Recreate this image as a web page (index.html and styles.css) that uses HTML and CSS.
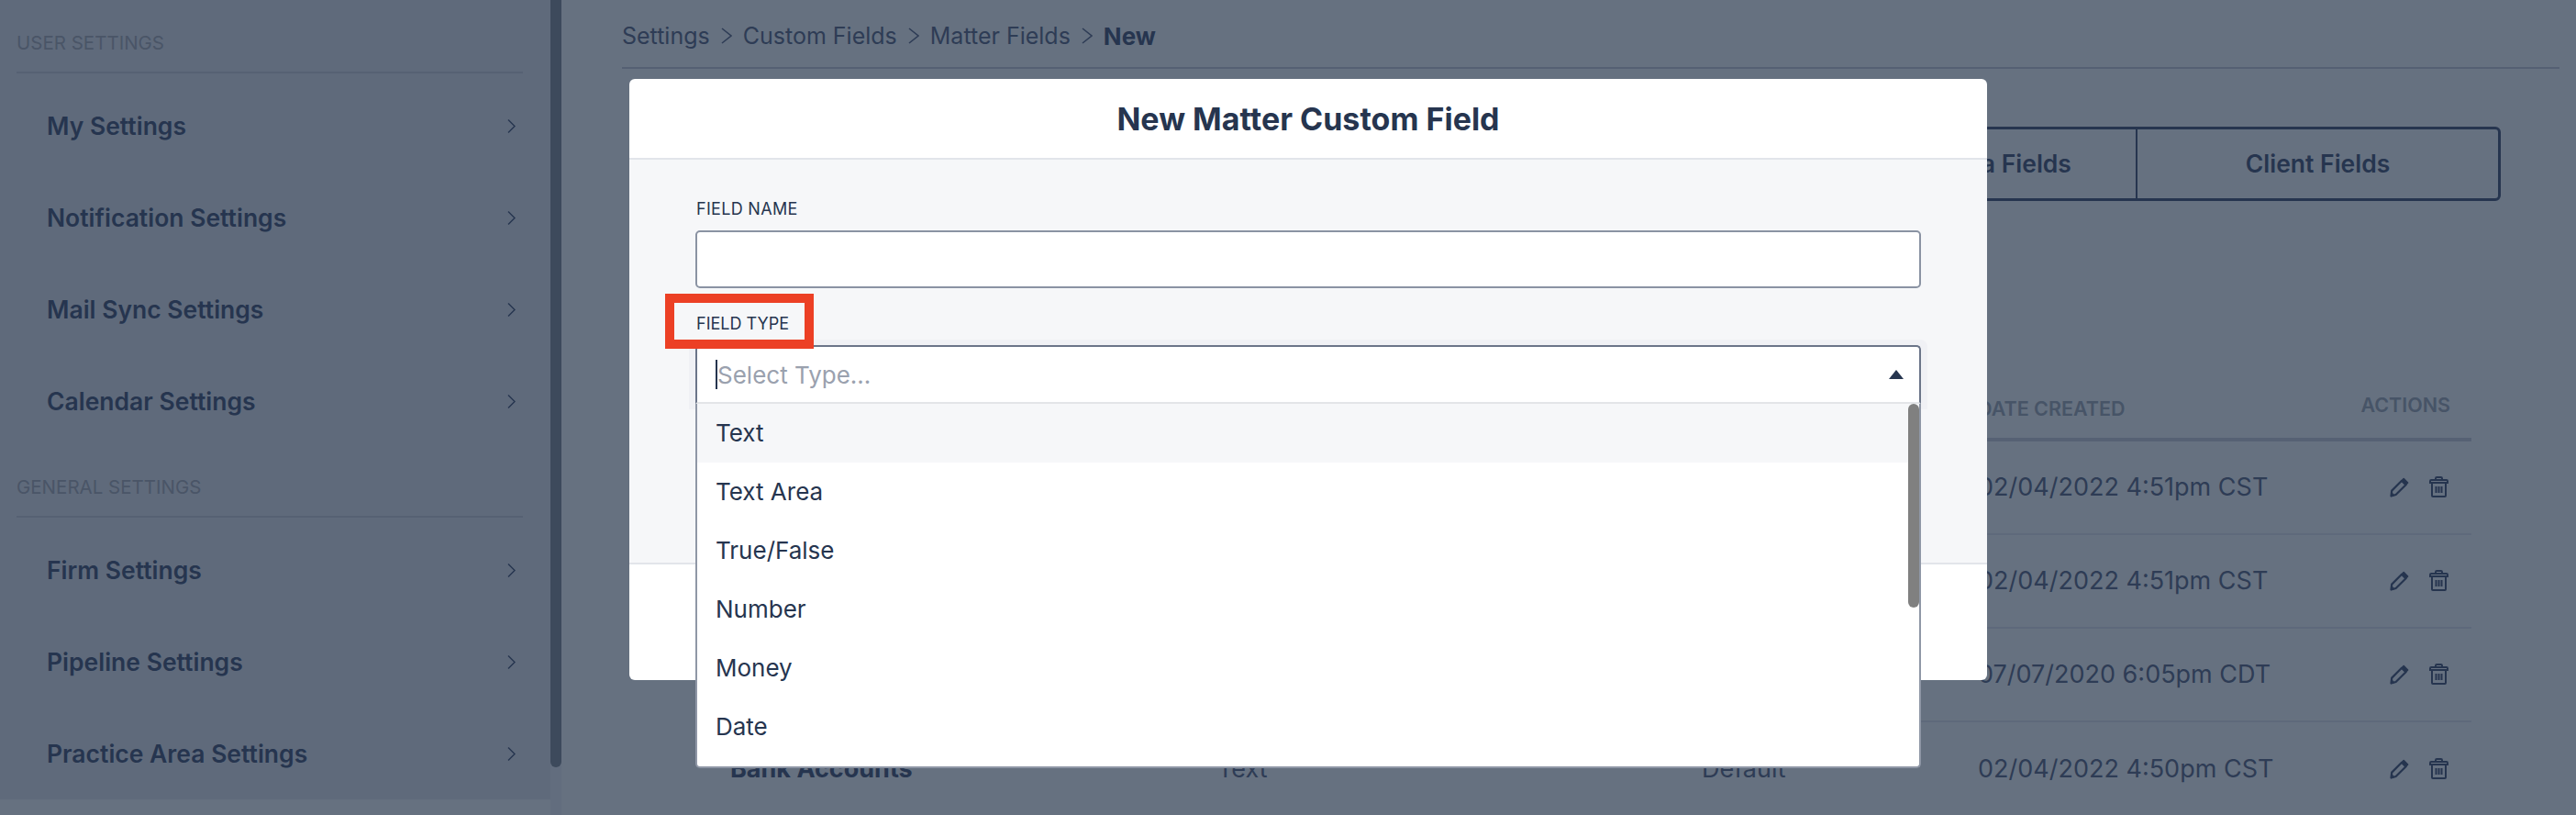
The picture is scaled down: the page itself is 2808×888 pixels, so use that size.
FILE: index.html
```html
<!DOCTYPE html>
<html lang="en">
<head>
<meta charset="utf-8">
<title>New Matter Custom Field</title>
<link rel="stylesheet" href="styles.css">
</head>
<body>
<div class="page">
  <aside class="sidebar">
    <div class="side-scroll">
      <section class="side-group">
        <h3 class="side-title">USER SETTINGS</h3>
        <a class="side-item"><span>My Settings</span><svg class="chev" viewBox="0 0 9 15"><path d="M1 .5l7 7-7 7"/></svg></a>
        <a class="side-item"><span>Notification Settings</span><svg class="chev" viewBox="0 0 9 15"><path d="M1 .5l7 7-7 7"/></svg></a>
        <a class="side-item"><span>Mail Sync Settings</span><svg class="chev" viewBox="0 0 9 15"><path d="M1 .5l7 7-7 7"/></svg></a>
        <a class="side-item"><span>Calendar Settings</span><svg class="chev" viewBox="0 0 9 15"><path d="M1 .5l7 7-7 7"/></svg></a>
      </section>
      <section class="side-group">
        <h3 class="side-title">GENERAL SETTINGS</h3>
        <a class="side-item"><span>Firm Settings</span><svg class="chev" viewBox="0 0 9 15"><path d="M1 .5l7 7-7 7"/></svg></a>
        <a class="side-item"><span>Pipeline Settings</span><svg class="chev" viewBox="0 0 9 15"><path d="M1 .5l7 7-7 7"/></svg></a>
        <a class="side-item"><span>Practice Area Settings</span><svg class="chev" viewBox="0 0 9 15"><path d="M1 .5l7 7-7 7"/></svg></a>
      </section>
    </div>
    <div class="side-track"><div class="side-thumb"></div></div>
  </aside>
  <main class="main">
    <nav class="crumbs">
      <span>Settings</span><svg class="crumb-sep" viewBox="0 0 12 18"><path d="M1 1l10 8-10 8"/></svg>
      <span>Custom Fields</span><svg class="crumb-sep" viewBox="0 0 12 18"><path d="M1 1l10 8-10 8"/></svg>
      <span>Matter Fields</span><svg class="crumb-sep" viewBox="0 0 12 18"><path d="M1 1l10 8-10 8"/></svg>
      <strong>New</strong>
    </nav>
    <div class="tabs">
      <div class="tab"></div>
      <div class="tab">Practice Area Fields</div>
      <div class="tab">Client Fields</div>
    </div>
    <div class="table">
      <div class="row head">
        <div class="c-name"></div><div class="c-type"></div><div class="c-def"></div>
        <div class="c-date">DATE CREATED</div>
        <div class="c-act">ACTIONS</div>
      </div>
      <div class="row">
        <div class="c-name"></div><div class="c-type"></div><div class="c-def"></div>
        <div class="c-date">02/04/2022 4:51pm CST</div>
        <div class="c-act"><svg class="ico-pen" viewBox="0 0 21 22"><use href="#pen"/></svg><svg class="ico-trash" viewBox="0 0 21 23"><use href="#trash"/></svg></div>
      </div>
      <div class="row">
        <div class="c-name"></div><div class="c-type"></div><div class="c-def"></div>
        <div class="c-date">02/04/2022 4:51pm CST</div>
        <div class="c-act"><svg class="ico-pen" viewBox="0 0 21 22"><use href="#pen"/></svg><svg class="ico-trash" viewBox="0 0 21 23"><use href="#trash"/></svg></div>
      </div>
      <div class="row">
        <div class="c-name"></div><div class="c-type"></div><div class="c-def"></div>
        <div class="c-date">07/07/2020 6:05pm CDT</div>
        <div class="c-act"><svg class="ico-pen" viewBox="0 0 21 22"><use href="#pen"/></svg><svg class="ico-trash" viewBox="0 0 21 23"><use href="#trash"/></svg></div>
      </div>
      <div class="row">
        <div class="c-name bold">Bank Accounts</div><div class="c-type">Text</div><div class="c-def">Default</div>
        <div class="c-date">02/04/2022 4:50pm CST</div>
        <div class="c-act"><svg class="ico-pen" viewBox="0 0 21 22"><use href="#pen"/></svg><svg class="ico-trash" viewBox="0 0 21 23"><use href="#trash"/></svg></div>
      </div>
    </div>
  </main>
</div>

<div class="modal">
  <header class="modal-head">New Matter Custom Field</header>
  <div class="modal-body">
    <label class="field-label">FIELD NAME</label>
    <div class="input"></div>
    <label class="field-label type-label">FIELD TYPE</label>
    <div class="select-wrap">
      <div class="select">
        <span class="caret"></span><span class="placeholder">Select Type...</span>
        <span class="arrow"></span>
      </div>
      <div class="menu">
        <div class="opt active">Text</div>
        <div class="opt">Text Area</div>
        <div class="opt">True/False</div>
        <div class="opt">Number</div>
        <div class="opt">Money</div>
        <div class="opt">Date</div>
        <div class="menu-thumb"></div>
      </div>
    </div>
  </div>
  <footer class="modal-foot"></footer>
</div>
<div class="callout"></div>

<svg class="defs" width="0" height="0">
  <defs>
    <g id="pen">
      <path d="M15.2 1.6L19.6 6 17.500 8.200 13 3.800Z" fill="currentColor" stroke="currentColor" stroke-width="1.6" stroke-linejoin="round"/>
      <path d="M13 3.800L17.500 8.200 6.600 19 1.500 20.500 2.200 14.600Z" fill="none" stroke="currentColor" stroke-width="2.200" stroke-linejoin="round"/>
      <path d="M1.500 20.500L2 16.600 5 19.600Z" fill="currentColor" stroke="currentColor" stroke-linejoin="round"/>
    </g>
    <g id="trash" fill="none" stroke="currentColor" stroke-width="2">
      <path d="M7 4V2.200C7 1.500 7.500 1 8.200 1h4.600c.7 0 1.200.5 1.200 1.200V4"/>
      <path d="M1 7V5.200C1 4.500 1.500 4 2.200 4h16.600c.7 0 1.200.5 1.200 1.200V7Z"/>
      <path d="M3 7v14c0 .6.4 1 1 1h13c.6 0 1-.4 1-1V7"/>
      <path d="M7.500 11v7M10.500 11v7M13.500 11v7"/>
    </g>
  </defs>
</svg>
</body>
</html>
```
FILE: styles.css
```css
* { box-sizing: border-box; }
html, body { margin: 0; padding: 0; }
body {
  width: 2808px;
  height: 888px;
  overflow: hidden;
  background: #667180;
  color: #26354f;
  font-family: Inter, "Noto Sans", sans-serif;
  font-size: 26px;
  position: relative;
}
.page { display: flex; height: 888px; }
.sidebar { width: 612px; height: 888px; display: flex; flex: none; }
.side-scroll {
  width: 600px;
  height: 871px;
  background: #5f6a7b;
  padding: 0 30px 0 18px;
}
.side-track { width: 12px; height: 888px; background: #626d7e; }
.side-thumb { height: 836px; background: #3d4a5c; border-radius: 0 0 6px 6px; }
.side-title {
  margin: 0 0 7px;
  height: 80px;
  padding-top: 34px;
  border-bottom: 2px solid #566173;
  font-size: 20.5px;
  line-height: 26px;
  font-weight: 400;
  color: #4a5567;
}
.side-group + .side-group .side-title { padding-top: 31px; height: 77px; }
.side-item {
  height: 100px;
  display: flex;
  align-items: center;
  justify-content: space-between;
  padding: 0 8px 0 33px;
  font-size: 26.5px;
  font-weight: 600;
  color: #26354f;
}
.side-item span { margin-top: -1px; }
.chev { width: 9px; height: 15px; fill: none; stroke: #26354f; stroke-width: 1.4; }

.main { flex: 1; padding: 0 18px 0 66px; min-width: 0; }
.crumbs {
  height: 75px;
  display: flex;
  align-items: center;
  gap: 12px;
  padding-top: 5px;
  border-bottom: 2px solid #556073;
  font-size: 25px;
  color: #2e3c55;
}
.crumbs strong { font-size: 26px; font-weight: 700; color: #26354f; }
.crumb-sep { width: 12px; height: 18px; fill: none; stroke: #2e3c55; stroke-width: 1.6; }
.tabs {
  display: flex;
  height: 81px;
  margin: 63px 64px 0 auto;
  width: 1194px;
  border: 3px solid #26354f;
  border-radius: 6px;
}
.tab {
  flex: 1;
  display: flex;
  align-items: center;
  justify-content: center;
  padding-bottom: 2px;
  font-size: 26.5px;
  font-weight: 600;
  color: #26354f;
  border-left: 2px solid #26354f;
}
.tab:first-child { border-left: 0; }
.tab:last-child { flex: 0 0 395px; }
.table { margin: 0 96px 0 102px; }
.row {
  display: flex;
  align-items: center;
  height: 102px;
  padding-bottom: 1px;
  border-bottom: 2px solid #5e697b;
  font-size: 27px;
  color: #2e3c55;
}
.row:last-child { border-bottom: 0; }
.row.head {
  height: 262px;
  padding-bottom: 0;
  align-items: flex-end;
  border-bottom: 4px solid #566174;
  font-size: 21.5px;
  font-weight: 600;
  color: #475467;
}
.c-name { width: 547px; padding-left: 16px; flex: none; }
.bold { font-weight: 700; color: #26354f; }
.c-type { width: 528px; flex: none; }
.c-def { width: 301px; flex: none; }
.c-date { width: 400px; flex: none; }
.c-act { flex: 1; display: flex; gap: 22px; align-items: center; justify-content: flex-end; padding-right: 25px; }
.row.head .c-date { padding-bottom: 19px; }
.row.head .c-act { padding: 0 23px 23px 0; }
.ico-pen { width: 21px; height: 22px; color: #26354f; }
.ico-trash { width: 21px; height: 23px; color: #26354f; }

.modal {
  position: absolute;
  left: 686px;
  top: 86px;
  width: 1480px;
  height: 655px;
  display: flex;
  flex-direction: column;
  background: #fff;
  border-radius: 6px;
}
.modal-head {
  height: 88px;
  flex: none;
  display: flex;
  align-items: center;
  justify-content: center;
  border-bottom: 2px solid #e2e5ea;
  font-size: 34px;
  font-weight: 700;
  color: #26354f;
}
.modal-body {
  height: 441px;
  flex: none;
  background: #f6f7f9;
  border-bottom: 2px solid #e2e5ea;
  padding: 0 72px;
  position: relative;
}
.modal-foot { flex: 1; }
.field-label {
  display: block;
  font-size: 18px;
  line-height: 24px;
  padding-left: 1px;
  color: #26354f;
}
.field-label:first-child { padding-top: 42px; height: 77px; letter-spacing: .3px; }
.input {
  height: 63px;
  background: #fff;
  border: 2px solid #8a93a3;
  border-radius: 5px;
}
.type-label { margin-top: 27px; }
.select-wrap {
  position: absolute;
  left: 65px;
  right: 65px;
  top: 196px;
  height: 76px;
  background: #f0f1f5;
  border-radius: 8px 8px 0 0;
  padding: 6px 7px 0;
}
.select {
  height: 64px;
  background: #fff;
  border: 2px solid #6b7589;
  border-bottom: 2px solid #e3e5e8;
  border-radius: 5px 5px 0 0;
  display: flex;
  align-items: center;
  padding: 0 17px 0 20px;
  position: relative;
}
.caret { width: 2px; height: 32px; background: #26354f; flex: none; }
.placeholder { color: #9aa1ae; }
.arrow {
  margin-left: auto;
  border-left: 8px solid transparent;
  border-right: 8px solid transparent;
  border-bottom: 10px solid #26354f;
}
.menu {
  position: absolute;
  left: 7px;
  right: 7px;
  top: 70px;
  height: 397px;
  background: #fff;
  border: 2px solid #8f97a6;
  border-top: 0;
  border-radius: 0 0 5px 5px;
}
.opt {
  height: 64px;
  display: flex;
  align-items: center;
  padding: 0 0 1px 20px;
  color: #26354f;
}
.opt.active { background: #f6f7f9; }
.menu-thumb {
  position: absolute;
  right: 0;
  top: 0;
  width: 12px;
  height: 222px;
  background: #808080;
  border-radius: 6px;
}
.callout {
  position: absolute;
  left: 725px;
  top: 320px;
  width: 162px;
  height: 60px;
  border: 10px solid #ec4025;
}
.defs { position: absolute; }
```
